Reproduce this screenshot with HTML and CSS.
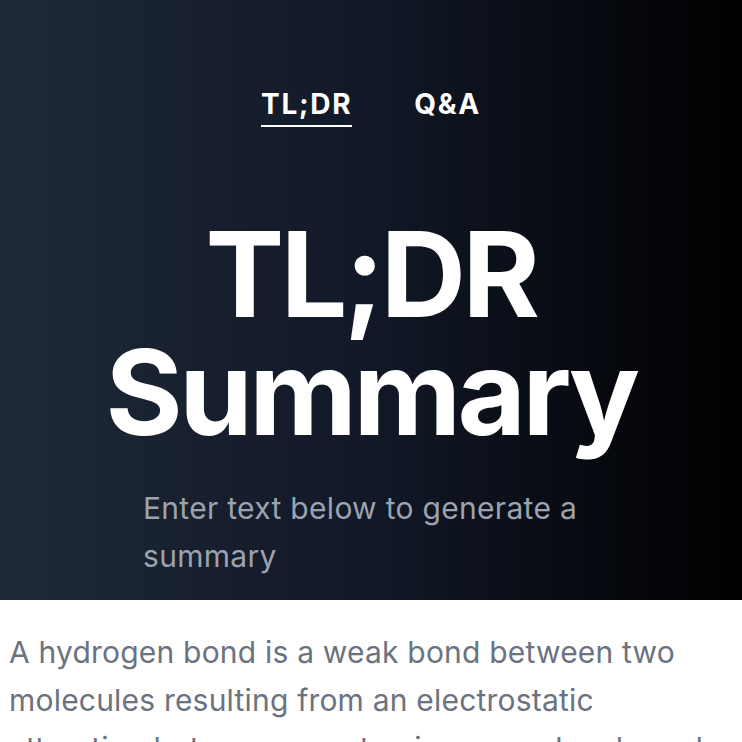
FILE: index.html
```html
<!DOCTYPE html>
<html lang="en">
<head>
<meta charset="utf-8">
<title>TL;DR Summary</title>
<link rel="stylesheet" href="styles.css">
</head>
<body>
<header class="hero">
  <nav class="nav">
    <a class="nav-link active" href="#">TL;DR</a>
    <a class="nav-link" href="#">Q&amp;A</a>
  </nav>
  <h1 class="title">TL;DR<br>Summary</h1>
  <p class="subtitle">Enter text below to generate a summary</p>
</header>
<main class="content">
  <div class="input-text">A hydrogen bond is a weak bond between two molecules resulting from an electrostatic attraction between a proton in one molecule and an electronegative atom in the other.</div>
</main>
</body>
</html>
```

FILE: styles.css
```css
* { box-sizing: border-box; }
html, body { margin: 0; padding: 0; }
body {
  font-family: Inter, "Noto Sans", sans-serif;
  background: #ffffff;
  overflow: hidden;
}
.hero {
  background: linear-gradient(to right, #1f2937, #111827, #000000);
  color: #ffffff;
  padding: 84px 0 20px;
  display: flex;
  flex-direction: column;
  align-items: center;
}
.nav {
  display: flex;
  gap: 62px;
  justify-content: center;
}
.nav-link {
  color: #ffffff;
  font-weight: 700;
  font-size: 28px;
  line-height: 40px;
  letter-spacing: 1.7px;
  text-decoration: none;
  padding-bottom: 1px;
  border-bottom: 2px solid transparent;
}
.nav-link.active { border-bottom-color: #ffffff; }
.title {
  margin: 88px 0 0;
  font-size: 118px;
  font-weight: 700;
  line-height: 118px;
  text-align: center;
  letter-spacing: -3.5px;
}
.subtitle {
  margin: 33px 0 0;
  width: 456px;
  font-size: 30px;
  line-height: 48px;
  letter-spacing: 0.3px;
  color: #9ca3af;
}
.content {
  padding: 28px 9px 0;
}
.input-text {
  width: 720px;
  font-size: 30px;
  line-height: 48px;
  letter-spacing: 0.2px;
  color: #6b7280;
}
```
